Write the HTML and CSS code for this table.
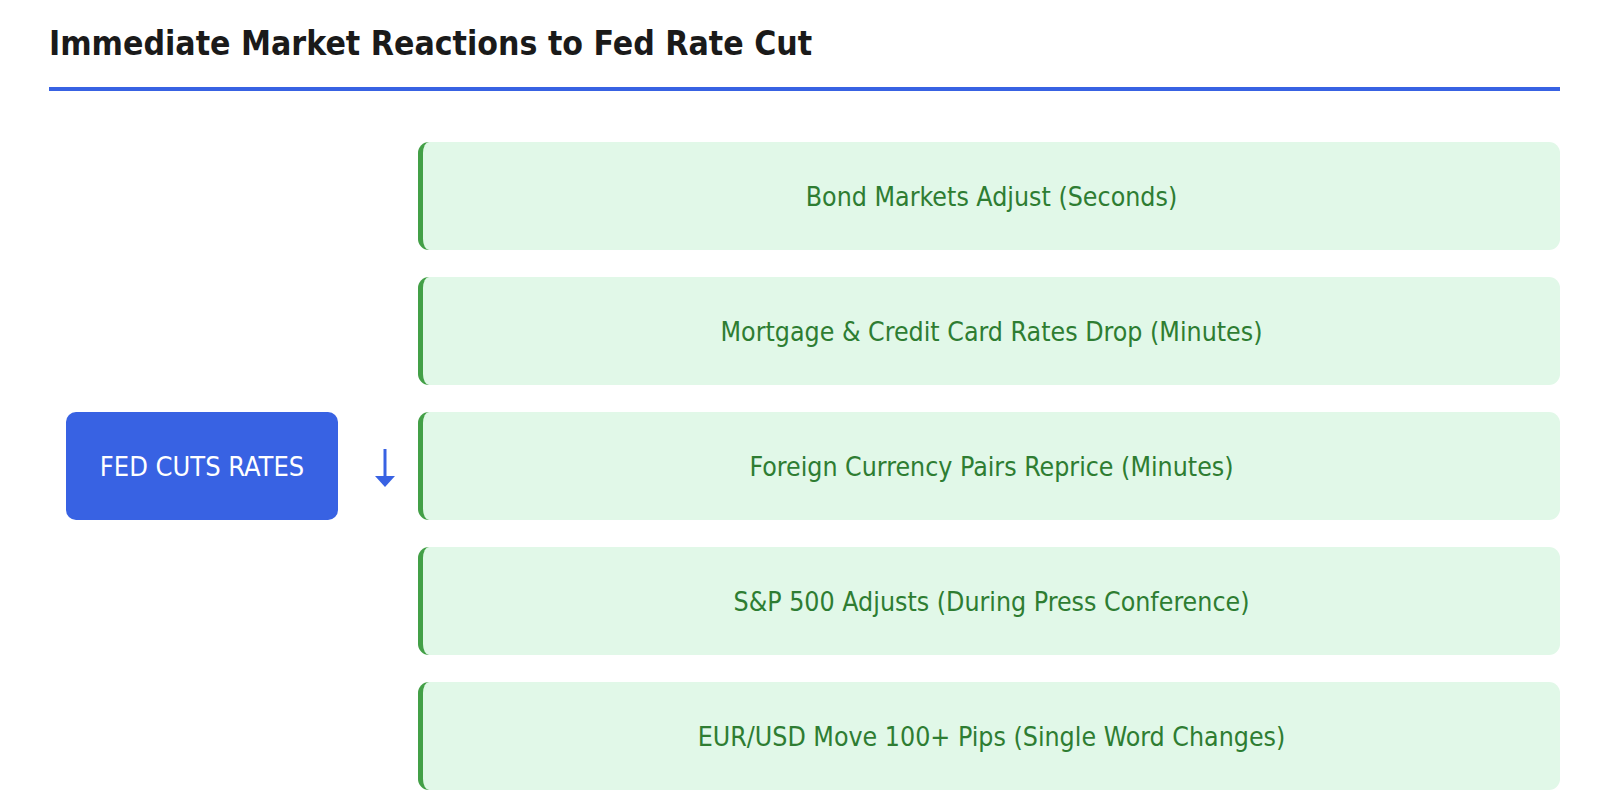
FILE: index.html
```html
<!DOCTYPE html>
<html>
<head>
<meta charset="utf-8">
<link rel="stylesheet" href="styles.css">
</head>
<body>
<div class="page">
  <h2 class="title">Immediate Market Reactions to Fed Rate Cut</h2>
  <div class="diagram">
    <div class="source">FED CUTS RATES</div>
    <div class="arrow">
      <svg width="22" height="38" viewBox="0 0 22 38" aria-label="↓">
        <line x1="11" y1="0" x2="11" y2="28" stroke="#3862e3" stroke-width="3"/>
        <polygon points="1,27 21,27 11,38" fill="#3862e3"/>
      </svg>
    </div>
    <div class="reactions">
      <div class="card">Bond Markets Adjust (Seconds)</div>
      <div class="card">Mortgage &amp; Credit Card Rates Drop (Minutes)</div>
      <div class="card">Foreign Currency Pairs Reprice (Minutes)</div>
      <div class="card">S&amp;P 500 Adjusts (During Press Conference)</div>
      <div class="card">EUR/USD Move 100+ Pips (Single Word Changes)</div>
    </div>
  </div>
</div>
</body>
</html>
```
FILE: styles.css
```css
html, body {
  margin: 0;
  padding: 0;
  background: #ffffff;
}
.page {
  padding: 0 40px 0 49px;
  font-family: "DejaVu Sans Condensed", "DejaVu Sans", Verdana, sans-serif;
}
.title {
  margin: 0;
  padding-top: 24px;
  padding-bottom: 23px;
  font-size: 33.5px;
  font-weight: bold;
  color: #1a1a1a;
  border-bottom: 4px solid #3862e3;
  line-height: 40px;
}
.diagram {
  display: flex;
  align-items: center;
  margin-top: 51px;
}
.source {
  margin-left: 17px;
  width: 272px;
  height: 108px;
  flex-shrink: 0;
  box-sizing: border-box;
  border-radius: 10px;
  background: #3862e3;
  color: #ffffff;
  font-size: 27px;
  display: flex;
  align-items: center;
  justify-content: center;
}
.arrow {
  width: 80px;
  flex-shrink: 0;
  box-sizing: border-box;
  padding-left: 36px;
  padding-top: 4px;
  display: flex;
  align-items: center;
}
.arrow svg {
  display: block;
}
.reactions {
  flex: 1;
  display: flex;
  flex-direction: column;
  gap: 27px;
}
.card {
  height: 108px;
  box-sizing: border-box;
  border-radius: 11px;
  border-left: 5px solid #43a047;
  background: #e1f8e8;
  color: #2e7d32;
  font-size: 26.5px;
  display: flex;
  align-items: center;
  justify-content: center;
}
```
